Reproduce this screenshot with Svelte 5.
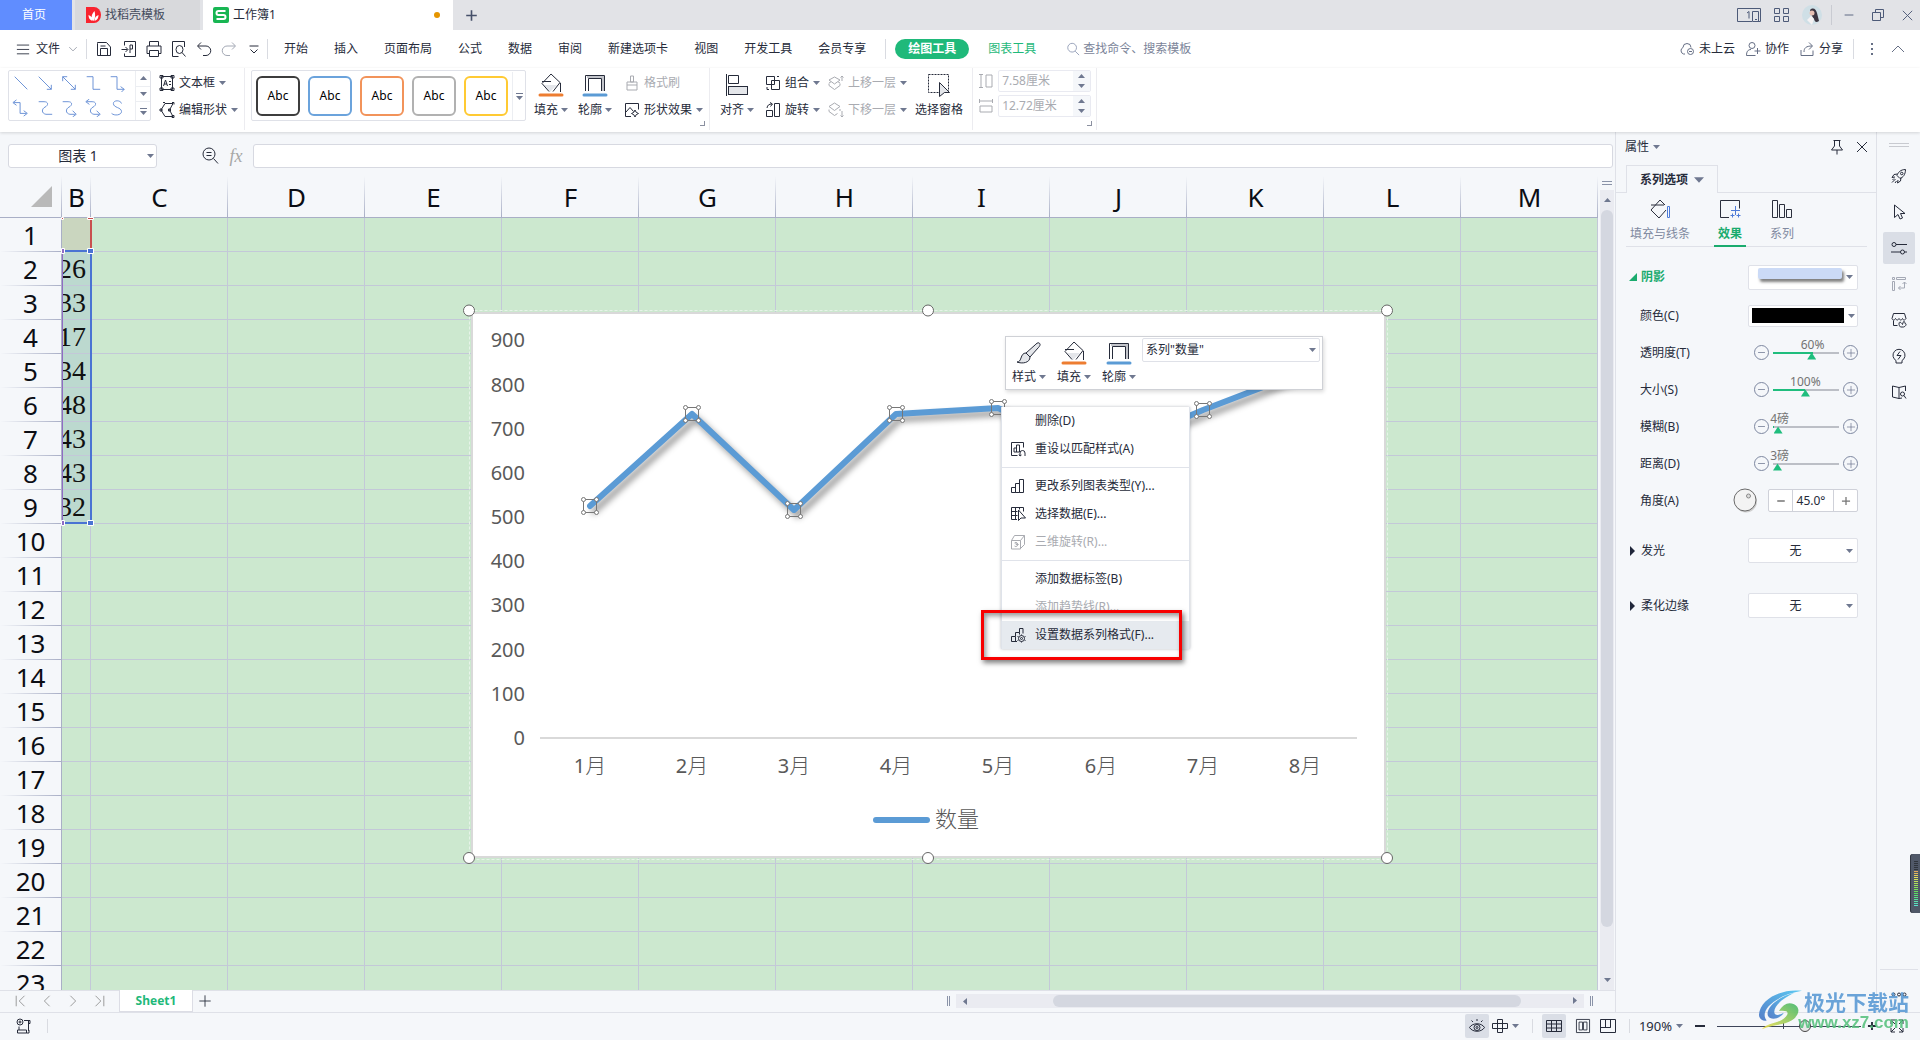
<script lang="ts">
  const menuTabs = ["开始", "插入", "页面布局", "公式", "数据", "审阅", "新建选项卡", "视图", "开发工具", "会员专享"];
  const columns = ["C", "D", "E", "F", "G", "H", "I", "J", "K", "L", "M"];
  const rows = Array.from({ length: 23 }, (_, i) => i + 1);
  const cellsB: Record<number, string> = { 2: "26", 3: "33", 4: "17", 5: "34", 6: "48", 7: "43", 8: "43", 9: "32" };

  const styleSwatches = [
    { name: "black", color: "#3d3d3d" },
    { name: "blue", color: "#6ba3dc" },
    { name: "orange", color: "#f2935a" },
    { name: "gray", color: "#b1b1b1" },
    { name: "gold", color: "#ffca33" },
  ];

  const series = [526, 733, 517, 734, 748, 643, 743, 832];
  const axis = [900, 800, 700, 600, 500, 400, 300, 200, 100, 0];
  const px = (i: number) => Math.round(119 + i * 102.1);
  const py = (v: number) => Math.round(426 - v * 0.4417);
  const linePoints = series.map((v, i) => `${px(i)},${py(v)}`).join(" ");

  const sliders = [
    { id: "alpha", label: "透明度(T)", text: "60%", pos: 60 },
    { id: "size", label: "大小(S)", text: "100%", pos: 49 },
    { id: "blur", label: "模糊(B)", text: "4磅", pos: 1 },
    { id: "dist", label: "距离(D)", text: "3磅", pos: 0 },
  ];

  type MenuItem = { label?: string; icon?: string; off?: boolean; hot?: boolean };
  const contextMenu: MenuItem[] = [
    { label: "删除(D)" },
    { label: "重设以匹配样式(A)", icon: "reset" },
    {},
    { label: "更改系列图表类型(Y)...", icon: "bars" },
    { label: "选择数据(E)...", icon: "pickData" },
    { label: "三维旋转(R)...", icon: "cube", off: true },
    {},
    { label: "添加数据标签(B)" },
    { label: "添加趋势线(R)...", off: true },
    { label: "设置数据系列格式(F)...", icon: "seriesFormat", hot: true },
  ];

  // stroke paths on a 16x16 box
  const icons: Record<string, string> = {
    burger: "M1 3.5h14M1 8.5h14M1 13.5h14",
    chevronDown: "M2 5l6 6 6-6",
    chevronUp: "M2 11l6-6 6 6",
    save: "M1.5 2.5v12h13v-8.500l-4-4.500h-9zM4.500 14.500v-7h7v7M4.500 5h5",
    export: "M3.500 4.500v-4h11v15h-11v-3M.5 8.500h6M4.500 6l2.500 2.500-2.500 2.500M9 12v-8h2.500v4h-2.500",
    print: "M3.500 5v-4.500h9v4.500M3.500 12.500h-2.500v-7.500h14v7.500h-2.500M3.500 9.500h9v6h-9z",
    preview: "M13.500 6v-5.500h-12v15h6M5 8.500a3.500 4 0 1 0 7 0a3.500 4 0 1 0-7 0M11 11.500l3.500 4",
    undo: "M5 1.500l-3.500 3.500 3.500 3.500M2 5h8a4.500 4.500 0 0 1 0 9.500h-3",
    redo: "M11 1.500l3.500 3.500-3.500 3.500M14 5h-8a4.500 4.500 0 0 0 0 9.500h3",
    more: "M3.500 5h9M4.500 8.500l3.500 3.500 3.500-3.500",
    search: "M2 6.500a5 5 0 1 0 10 0a5 5 0 1 0-10 0M10.500 10.500l4.500 4.500",
    cloud: "M6 13h-1.500a3.500 3.500 0 0 1-.5-6.500a4 4 0 0 1 8 0M8.500 10.500a3 3 0 1 0 6 0a3 3 0 1 0-6 0M10 10.500h3",
    person: "M4 4.500a3 3 0 1 0 6 0a3 3 0 1 0-6 0M6 8.500c-3 0-4.500 2-4.500 6h9M12.500 7v6M9.500 10h6",
    share: "M2 9v5.500h12v-5M5 11c0-4 2-6 8-6M10 1.500l3.500 3.500-3.500 3.500",
    dots: "M8 2v2M8 7v2M8 12v2",
    textBox: "M2.500 1.500h11v13h-11zM1 .5h3v2.500h-3zM12 .5h3v2.500h-3zM1 13h3v2.500h-3zM12 13h3v2.500h-3zM4.500 11l2-6 2 6M5 9h3M10 6.500h2M10 9.500h2",
    editShape: "M2 8l4-6.500h8l-3.500 6.500 3.500 6.500h-8zM6 .5h-2M13 .5h2v2M1 7h2v2h-2zM13 13.500h2v2h-2zM9.500 7h2v2h-2z",
    brush: "M6.500 1h3v6h-3zM3 7h10v3h-10zM3 10v5h10v-5",
    effects: "M7 14.500h-5.500v-13h13v6M2 10l4-4.500 3.500 4M11 8l1.200 2.300 2.300 1.200-2.300 1.200-1.200 2.300-1.200-2.300-2.300-1.200 2.300-1.200z",
    group: "M1.500 1.500h8v8h-8zM6.500 5.500h8v9h-8zM12 1.500h2M2 12v2.500h2",
    rotate: "M9.500 1.500h5v13h-5zM1.500 8.500h6v6h-6zM2 6c.5-3 2-4 5-4M5 .5l2.500 1.500-2 2.500",
    layerUp: "M6.500 2l5.500 3-5.500 4-5.500-4zM1 8l2-1.200M12 8l-2-1.200M1 8.500v2l5.500 4 5.500-4v-2M14 6v-5M12.500 2.500l1.500-1.500 1.500 1.500",
    layerDown: "M6.500 1l5.500 3.500-5.500 4-5.500-4zM1 7.500v2l5.500 4 3-2M12 7v2M14 9v6M12.500 13.500l1.500 1.500 1.500-1.500",
    height: "M1 1.500h4M3 1.500v13M1 14.500h4M8 2h6v12h-6z",
    width: "M1.500 1v4M1.500 3h13M14.500 1v4M2 8h12v6h-12z",
    pin: "M4.500 1.500h7M5.500 2v5l-3 4h11l-3-4v-5M8 11v4.500",
    close: "M3 3l10 10M13 3l-10 10",
    first: "M2.500 2v12M12 2l-6 6 6 6",
    prev: "M11 2l-6 6 6 6",
    next: "M5 2l6 6-6 6",
    last: "M4 2l6 6-6 6M13.500 2v12",
    plus: "M8 1.500v13M1.500 8h13",
    minus: "M3 8h10",
    reset: "M13.500 6.500v-5h-12v13h6M4 11v-4h2.500v-3h3v7h-5.500M6.500 7v4M10 15v-3a2.500 2.500 0 0 1 5 0v3M9 13.500l1 1.500 1.500-1",
    bars: "M1.500 14.500v-5h4v5zM5.500 14.500v-9h4v9zM9.500 14.500v-13h4v13z",
    pickData: "M7 13.500h-5.500v-12h12v4M1.500 5.500h6M1.500 9.500h6M5.500 1.500v12M9.500 1.500v2M8.500 4v10.500l2.500-2.500h4.500z",
    cube: "M1.500 6.500h9v8.500h-9zM1.500 6.500l3-5h10l-4 5M14.500 1.500v9l-4 4M4.500 12a2 2 0 1 0 0-3M6 8v2.500h2.500",
    seriesFormat: "M7 14.500h-5.500v-5h4v-4h4v-4h3.500v5M5.500 9.500v5M9.500 5.500v2M8.500 11.500a3 3 0 1 0 6 0a3 3 0 1 0-6 0M10.500 11.500a1 1 0 1 0 2 0a1 1 0 1 0-2 0M11.500 7.500v1M11.500 14.500v1M7.500 9.500l1.200.5M14.500 13l1 .5M7.500 13.500l1-.5M14.500 10l1-.5",
    rocket: "M14.500 1.500c-5 0-7.500 3-8.500 6l3 3c3-1 5.500-4 5.500-9zM9.500 5.500a1 1 0 1 0 2.500 0a1 1 0 1 0-2.500 0M6.500 6l-3.500.5-2 3 3-.5M10 9.500l-.5 3.500-3 2 .5-3M4.500 11l-3.500 3.500M3 10.500l-1.500 1.500M5.500 13l-1.500 2",
    cursor: "M3.500 1v12.500l3.500-3 2 4.500 2.500-1-2-4.500h4.500z",
    sliders: "M1 4.500a2 2 0 1 0 4 0a2 2 0 1 0-4 0M5 4.500h11M9.500 12a2 2 0 1 0 4 0a2 2 0 1 0-4 0M0 12h9.500M13.500 12h2.500",
    transpose: "M1.500 5.500h2v9h-2zM5.500 1.500h9v2h-9zM1.500 1.500h2v2h-2zM13.500 6v6h-6M11.500 8l2-2 2 2M9.500 10l-2 2 2 2",
    skin: "M2.500 8.500v5h4M2.500 1.500h11l1.500 5c-1 2-3 2-3.500 0c-1 2-2.500 2-3.500 0c-1 2-2.500 2-3.500 0c-1 2-3 2-3.500 0zM8 12c0-3 2-2 3.500.5c1-4 2-4 2.500-1c2 0 1 3-1.500 3.500h-3c-1-1-1.500-2-1.500-3z",
    bulb: "M5 12.500a6 6 0 1 1 6 0v2.500h-6zM9 3.500l-3 4h4l-3 4",
    book: "M8 3.500l-6.500-1.500v11l6.500 1.500 3-.5M8 3.500v11M8 3.500l6.500-1.500v5M9.500 10a2 2 0 1 0 4 0a2 2 0 1 0-4 0M13 11.500l2 3",
    macro: "M1 4a3 3 0 1 0 6 0a3 3 0 1 0-6 0M3 4a1 1 0 1 0 2 0a1 1 0 1 0-2 0M8 2.500h6v3h-2M12.500 3v10M3 8.500v3.500M1.500 12h9v3h-9zM10.500 15h2.500v-3",
    eye: "M.5 9.500c3-5 12-5 15 0c-3 5-12 5-15 0zM5 9.500a3 3 0 1 0 6 0a3 3 0 1 0-6 0M7 9.500a1 1 0 1 0 2 0a1 1 0 1 0-2 0M8 1v2M2.500 2.500l1.500 1.500M13.500 2.500l-1.500 1.500",
    cross: "M5.500 1.500h5v13h-5zM.5 5.500h15v5h-15z",
    grid: "M.5 2.500h15v11h-15zM.5 6h15M.5 10h15M5.500 2.500v11M10.500 2.500v11",
    pages: "M.5 .5h15v15h-15zM3.500 3.500h4v9h-4zM8.500 3.500h4v9h-4z",
    breaks: "M.5 1.500h15v13h-15zM.5 9.500h10v-8M5.500 1.500v8M10.500 9.500v-2",
    full: "M2 6v-4h4M10 2h4v4M14 10v4h-4M6 14h-4v-4M2 2l4 4M14 2l-4 4M14 14l-4-4M2 14l4-4",
  };

  const lineShapes = [
    "M3 3l14 14",
    "M3 3l14 14M17 12v5h-5",
    "M3 3l14 14M17 12v5h-5M3 8v-5h5",
    "M3 3h7v14h8",
    "M3 3h7v14h8M14 14l4 3-3 3",
    "M5 1l-4 3 4 3M2 4h7v12h7M13 13l4 3-4 3",
    "M3 3h6c5 0 5 4 1 6s-4 7 1 8h7",
    "M3 3h6c5 0 5 4 1 6s-4 7 1 8h6M14 13l4 4-4 3",
    "M6 0l-4 3 4 3M3 3h6c5 0 5 4 1 6s-4 7 1 8h6M14 13l4 4-4 3",
    "M15 5c-1-4-9-4-9 0c0 5 9 4 9 9c0 4-8 5-11 2",
  ];

  const railIcons = ["rocket", "cursor", "sliders", "transpose", "skin", "bulb", "book"];
  const levels = Array.from({ length: 23 }, (_, i) =>
    i < 5 ? "#2f343c" : `hsl(${Math.round(35 + (i - 5) * 8)} 70% 62%)`,
  );
</script>

{#snippet icon(name: string, size = 16)}
  <svg class="icon" width={size} height={size} viewBox="0 0 16 16" aria-hidden="true">
    <path d={icons[name]} />
  </svg>
{/snippet}

{#snippet caret(big = false)}
  <svg class="caret" width={big ? 10 : 7} height={big ? 6 : 4} viewBox="0 0 7 4" aria-hidden="true">
    <path d="M0 0h7l-3.500 4z" />
  </svg>
{/snippet}

{#snippet fillIcon(size = 24)}
  <svg class="icon" width={size} height={size} viewBox="0 0 24 24" aria-hidden="true">
    <path d="M5 12h13l-7 7z" fill="#e4e6ea" stroke="none" />
    <path d="M3 8.500h9M12 1l-9 9.500 7 8M12 1l9 8.500-7 9M21.500 10v9" />
    <path d="M1 22h22" stroke="#ed7d31" stroke-width="3" stroke-linecap="round" />
  </svg>
{/snippet}

{#snippet outlineIcon(size = 24)}
  <svg class="icon" width={size} height={size} viewBox="0 0 24 24" aria-hidden="true">
    <path d="M4 4h16v14" stroke="#c3c5cb" stroke-width="2" />
    <path d="M2.500 18v-15.500h19v15.500M5.500 18v-12.500h13v12.500" />
    <path d="M1 22h22" stroke="#5b9bd5" stroke-width="3" stroke-linecap="round" />
  </svg>
{/snippet}

<div class="app">
  <header class="titlebar">
    <button class="doc home">首页</button>
    <button class="doc docer">
      <svg width="15" height="16" viewBox="0 0 15 16" aria-hidden="true">
        <path d="M0 0h8a7 8 0 0 1 0 16h-8z" fill="#f9242f" />
        <path d="M7.500 14c-3-3-2-7 1-10c1 4 1 7-1 10zM6.500 14c-3-1-4-3-4-6c3 1 4 3 4 6zM8.500 14c0-3 1-5 4-6c0 3-1 5-4 6z" fill="#fff" />
      </svg>
      找稻壳模板
    </button>
    <button class="doc current">
      <svg width="16" height="16" viewBox="0 0 16 16" aria-hidden="true">
        <rect width="16" height="16" rx="2" fill="#18b653" />
        <path d="M12.500 4h-7q-2 0-2 2t2 2h5q2 0 2 2t-2 2h-7" fill="none" stroke="#fff" stroke-width="2" />
      </svg>
      工作簿1
      <span class="unsaved"></span>
    </button>
    <button class="new-doc" aria-label="新建">{@render icon("plus", 13)}</button>
    <div class="win">
      <svg class="icon" width="24" height="14" viewBox="0 0 24 14" aria-hidden="true">
        <path d="M15 13.500h-14.500v-13h23v13h-3M15.500 3.500h6v10h-6zM18 11.500h2M10 5l2-1.500v7" />
      </svg>
      <svg class="icon" width="15" height="14" viewBox="0 0 15 14" aria-hidden="true">
        <path d="M.5 .5h5v5h-5zM9.500 .5h5v5h-5zM.5 8.500h5v5h-5zM9.500 8.500h5v5h-5z" />
      </svg>
      <svg width="20" height="20" viewBox="0 0 20 20" aria-hidden="true">
        <circle cx="10" cy="10" r="10" fill="#cfdfe6" />
        <path d="M8 5c3-3 6-1 7 3l2 8c-3 2-4 1-5-2l-2-3z" fill="#3b3440" />
        <circle cx="10" cy="8" r="2.500" fill="#e7c0b4" />
        <path d="M5 15l4-4 3 3-2 6z" fill="#f5f2f3" />
      </svg>
      <span class="bar-sep"></span>
      <button aria-label="最小化">{@render icon("minus", 14)}</button>
      <button aria-label="还原">
        <svg class="icon" width="12" height="12" viewBox="0 0 12 12"><path d="M.5 3.500h8v8h-8zM3.500 3.500v-3h8v8h-3" /></svg>
      </button>
      <button aria-label="关闭">{@render icon("close", 15)}</button>
    </div>
  </header>

  <nav class="menubar">
    <button class="file">{@render icon("burger", 14)}文件<span class="dim">{@render icon("chevronDown", 10)}</span></button>
    <span class="bar-sep"></span>
    <div class="quick">
      {#each ["save", "export", "print", "preview", "undo", "redo", "more"] as q (q)}
        <button class:faint={q === "redo"} aria-label={q}>{@render icon(q)}</button>
      {/each}
    </div>
    <span class="bar-sep"></span>
    <div class="tabs">
      {#each menuTabs as t (t)}
        <button>{t}</button>
      {/each}
    </div>
    <span class="bar-sep"></span>
    <button class="pill">绘图工具</button>
    <button class="green">图表工具</button>
    <label class="find">
      {@render icon("search", 14)}
      <input type="text" placeholder="查找命令、搜索模板" />
    </label>
    <div class="account">
      <button>{@render icon("cloud")}未上云</button>
      <button>{@render icon("person")}协作</button>
      <button>{@render icon("share")}分享</button>
      <span class="bar-sep"></span>
      <button class="dots" aria-label="更多">{@render icon("dots")}</button>
      <button aria-label="收起">{@render icon("chevronUp")}</button>
    </div>
  </nav>

  <section class="ribbon">
    <div class="group shapes">
      <div class="gallery">
        <div class="shape-grid">
          {#each lineShapes as d (d)}
            <button aria-label="线条"><svg width="18" height="18" viewBox="0 0 20 20"><path {d} /></svg></button>
          {/each}
        </div>
        <div class="steps">
          <span class="up">{@render caret()}</span>
          <span>{@render caret()}</span>
          <span class="drop">{@render caret()}</span>
        </div>
      </div>
      <div class="stack">
        <button class="cmd">{@render icon("textBox")}文本框{@render caret()}</button>
        <button class="cmd">{@render icon("editShape")}编辑形状{@render caret()}</button>
      </div>
    </div>

    <div class="group styles">
      <div class="swatches">
        {#each styleSwatches as s (s.name)}
          <button class="swatch" style="border-color:{s.color}">Abc</button>
        {/each}
        <span class="drop">{@render caret()}</span>
      </div>
      <button class="big">{@render fillIcon()}<span>填充{@render caret()}</span></button>
      <button class="big">{@render outlineIcon()}<span>轮廓{@render caret()}</span></button>
      <div class="stack">
        <button class="cmd off">{@render icon("brush")}格式刷</button>
        <button class="cmd">{@render icon("effects")}形状效果{@render caret()}</button>
      </div>
      <i class="corner"></i>
    </div>

    <div class="group arrange">
      <button class="big">
        <svg class="icon" width="24" height="24" viewBox="0 0 24 24" aria-hidden="true">
          <rect x="3.500" y="13.500" width="19" height="8" fill="#e4e6ea" />
          <path d="M1.500 1v22M3.500 2.500h10v8h-10z" />
        </svg>
        <span>对齐{@render caret()}</span>
      </button>
      <div class="stack">
        <button class="cmd">{@render icon("group")}组合{@render caret()}</button>
        <button class="cmd">{@render icon("rotate")}旋转{@render caret()}</button>
      </div>
      <div class="stack">
        <button class="cmd off">{@render icon("layerUp")}上移一层{@render caret()}</button>
        <button class="cmd off">{@render icon("layerDown")}下移一层{@render caret()}</button>
      </div>
      <button class="big">
        <svg class="icon" width="24" height="24" viewBox="0 0 24 24" aria-hidden="true">
          <path d="M1.500 1.500h20v18h-20z" stroke-dasharray="2 1" />
          <path d="M12.500 9.500l10 10h-5l-5 4z" fill="#e4e6ea" />
        </svg>
        <span>选择窗格</span>
      </button>
    </div>

    <div class="group dims">
      <label>
        {@render icon("height")}
        <span class="spin"><input type="text" value="7.58厘米" aria-label="高度" disabled /><span class="steps2"><b>{@render caret()}</b>{@render caret()}</span></span>
      </label>
      <label>
        {@render icon("width")}
        <span class="spin"><input type="text" value="12.72厘米" aria-label="宽度" disabled /><span class="steps2"><b>{@render caret()}</b>{@render caret()}</span></span>
      </label>
      <i class="corner"></i>
    </div>
  </section>

  <main>
    <section class="sheet">
      <div class="formula">
        <label class="name-box">
          <input type="text" value="图表 1" aria-label="名称框" />
          {@render caret()}
        </label>
        <button class="zoom-fx" aria-label="浏览">
          <svg class="icon" width="18" height="18" viewBox="0 0 18 18"><path d="M2 7a6 6 0 1 0 12 0a6 6 0 1 0-12 0M12.500 11.500l4.500 5M5.500 5.500h5M5.500 8.500h5" /></svg>
        </button>
        <span class="fx">fx</span>
        <input class="formula-input" type="text" aria-label="编辑栏" />
      </div>

      <div class="canvas">
        <div class="grid">
          <table>
            <thead>
              <tr>
                <th class="corner-cell"><svg width="21" height="21" viewBox="0 0 21 21" aria-hidden="true"><path d="M21 0v21h-21z" fill="#b9b9b9" /></svg></th>
                <th class="narrow">B</th>
                {#each columns as c (c)}
                  <th>{c}</th>
                {/each}
              </tr>
            </thead>
            <tbody>
              {#each rows as r (r)}
                <tr>
                  <th scope="row">{r}</th>
                  <td class:head={r === 1} class:picked={r > 1 && r < 10}><div>{cellsB[r] ?? ""}</div></td>
                  {#each columns as c (c)}
                    <td></td>
                  {/each}
                </tr>
              {/each}
            </tbody>
          </table>
        </div>

        <div class="vscroll">
          <span class="split"><i></i></span>
          <div class="track">
            <span class="up">{@render caret()}</span>
            <div class="thumb"></div>
            <span>{@render caret()}</span>
          </div>
        </div>

        <svg class="ranges" width="36" height="314" viewBox="0 0 36 314" aria-hidden="true">
          <path d="M31 3v34" stroke="#c9504f" stroke-width="2" />
          <path d="M2.500 36v272" stroke="#8f6cc4" stroke-width="1" />
          <path d="M4 36h27M31 36v272M4 308h27" stroke="#4a73d3" stroke-width="2" fill="none" />
          <g stroke="#fff">
            <path d="M27.500 2.500h6v2h-6zM1.500 2.500h2v2h-2z" fill="#c9504f" />
            <path d="M1.500 33.500h3v5h-3zM1.500 305.500h3v5h-3z" fill="#8f6cc4" />
            <path d="M27.500 33.500h6v5h-6zM27.500 305.500h6v5h-6z" fill="#4a73d3" />
          </g>
        </svg>

        <svg class="chart" width="932" height="562" viewBox="-8 -8 932 562" role="img" aria-label="数量">
          <rect x="-1.500" y="-1.500" width="918" height="549" fill="none" stroke="#e6f3e8" stroke-dasharray="3 2" />
          <rect x="1" y="1" width="913" height="544" fill="#fff" stroke="#d9d9d9" stroke-width="2" />
          {#each axis as a (a)}
            <text class="val" x="54" y={py(a) + 7}>{a}</text>
          {/each}
          <path d="M69 426h817" stroke="#d9d9d9" stroke-width="2" />
          <polyline class="plot" points={linePoints} />
          {#each series as v, i (i)}
            <g class="marker" transform="translate({px(i)} {py(v)})">
              <rect x="-6.500" y="-6.500" width="13" height="13" />
              <circle cx="-6.500" cy="-6.500" r="2" />
              <circle cx="6.500" cy="-6.500" r="2" />
              <circle cx="-6.500" cy="6.500" r="2" />
              <circle cx="6.500" cy="6.500" r="2" />
            </g>
            <text class="cat" x={px(i)} y="461">{i + 1}<tspan>月</tspan></text>
          {/each}
          <path d="M405 508h51" stroke="#5b9bd5" stroke-width="6" stroke-linecap="round" />
          <text class="legend" x="464" y="515">数量</text>
          {#each [-2, 457, 916] as hx (hx)}
            <circle class="handle" cx={hx} cy="-1.500" r="5.500" />
            <circle class="handle" cx={hx} cy="546" r="5.500" />
          {/each}
        </svg>

        <div class="mini">
          <button class="big">
            <svg class="icon" width="24" height="24" viewBox="0 0 24 24" aria-hidden="true">
              <path d="M22 2c2 1 1 3-1 5l-8 9-4-4 9-8c1-1 3-3 4-2zM9 12c-3 0-4 2-5 5-1 3-2 4-4 4 5 2 13 1 13-5z" fill="#e4e6ea" />
            </svg>
            <span>样式{@render caret()}</span>
          </button>
          <button class="big">{@render fillIcon()}<span>填充{@render caret()}</span></button>
          <button class="big">{@render outlineIcon()}<span>轮廓{@render caret()}</span></button>
          <label class="pick">
            <select aria-label="图表元素"><option>系列"数量"</option></select>
            {@render caret()}
          </label>
        </div>

        <div class="menu" role="menu">
          {#each contextMenu as m, i (i)}
            {#if m.label}
              <button role="menuitem" class:off={m.off} class:hot={m.hot}>
                <span class="slot">{#if m.icon}{@render icon(m.icon)}{/if}</span>{m.label}
              </button>
            {:else}
              <hr />
            {/if}
          {/each}
        </div>
        <div class="callout"></div>
      </div>

      <div class="sheetbar">
        <div class="nav">
          {#each ["first", "prev", "next", "last"] as n (n)}
            <button aria-label={n}>{@render icon(n, 14)}</button>
          {/each}
        </div>
        <button class="sheet-tab">Sheet1</button>
        <button class="add-sheet" aria-label="新建工作表">{@render icon("plus", 14)}</button>
        <div class="hscroll">
          <i class="grip"></i>
          <div class="track">
            <span class="left">{@render caret()}</span>
            <div class="thumb"></div>
            <span class="right">{@render caret()}</span>
          </div>
          <i class="grip"></i>
        </div>
      </div>
    </section>

    <aside class="panel">
      <div class="panel-head">
        <button>属性{@render caret()}</button>
        <span>{@render icon("pin")}{@render icon("close")}</span>
      </div>
      <div class="panel-tabs">
        <button>系列选项{@render caret(true)}</button>
      </div>
      <div class="subtabs">
        <button>
          <svg class="icon" width="20" height="20" viewBox="0 0 20 20" aria-hidden="true">
            <path d="M1 6h13M10 1l-9 10 8 8 7-8M10 1l5 5" />
            <path d="M17.500 7.500h2v11h-2z" stroke="#4d7bd8" />
          </svg>
          填充与线条
        </button>
        <button class="on">
          <svg class="icon" width="20" height="20" viewBox="0 0 20 20" aria-hidden="true">
            <path d="M9 18.500h-8.500v-17h19v8" />
            <path d="M15.500 7v9M11 11.500h9M12.500 14.500v4M10.500 16.500h4M18.500 14.500v4M16.500 16.500h4" stroke="#4d7bd8" />
          </svg>
          效果
        </button>
        <button>
          <svg class="icon" width="20" height="20" viewBox="0 0 20 20" aria-hidden="true">
            <path d="M.5 1.500h5v17h-5zM7.500 5.500h5v13h-5zM14.500 10.500h5v8h-5z" />
          </svg>
          系列
        </button>
      </div>

      <div class="props">
        <div class="section lead">
          <span class="green"><svg width="8" height="8" viewBox="0 0 8 8" aria-hidden="true"><path d="M8 0v8h-8z" fill="#1aab6e" /></svg>阴影</span>
          <button class="drop-box shadow" aria-label="阴影样式"><i></i>{@render caret()}</button>
        </div>
        <div class="row">
          <span>颜色(C)</span>
          <button class="drop-box color" aria-label="颜色"><i></i>{@render caret()}</button>
        </div>
        {#each sliders as s (s.id)}
          <div class="row">
            <label for={s.id}>{s.label}</label>
            <div class="slider">
              <button aria-label="减少">{@render icon("minus", 11)}</button>
              <div class="rail-box">
                <span class="tip" style="left:{s.pos < 10 ? 10 : s.pos}%">{s.text}</span>
                <input id={s.id} type="range" min="0" max="100" value={s.pos} style="--fill:{s.pos}%" />
              </div>
              <button aria-label="增加">{@render icon("plus", 10)}</button>
            </div>
          </div>
        {/each}
        <div class="row">
          <label for="angle">角度(A)</label>
          <div class="angle">
            <svg width="25" height="25" viewBox="0 0 25 25" aria-hidden="true">
              <circle cx="13" cy="13.500" r="11" fill="#cfcfcf" />
              <circle cx="12" cy="12" r="11" fill="#f3f3f3" stroke="#6b6b6b" />
              <circle cx="15.500" cy="8" r="2" fill="#ddd" stroke="#8b8b8b" />
            </svg>
            <div class="number">
              <button aria-label="减少">{@render icon("minus", 12)}</button>
              <input id="angle" type="text" value="45.0°" />
              <button aria-label="增加">{@render icon("plus", 10)}</button>
            </div>
          </div>
        </div>
        {#each [{ id: "glow", label: "发光" }, { id: "soft", label: "柔化边缘" }] as s (s.id)}
          <div class="section">
            <label for={s.id}><svg width="8" height="10" viewBox="0 0 8 10" aria-hidden="true"><path d="M1 0l5 5-5 5z" fill="#20263a" /></svg>{s.label}</label>
            <span class="drop-box">
              <select id={s.id}><option>无</option></select>{@render caret()}
            </span>
          </div>
        {/each}
      </div>
    </aside>

    <aside class="rail">
      <i class="rail-grip"></i>
      {#each railIcons as r (r)}
        <button class:active={r === "sliders"} class:faint={r === "transpose"} aria-label={r}>{@render icon(r)}</button>
      {/each}
      <span class="rail-end">
        <svg class="icon" width="16" height="5" viewBox="0 0 16 5" aria-hidden="true"><path d="M1 2.500a1 1 0 1 0 3 0a1 1 0 1 0-3 0M6.500 2.500a1 1 0 1 0 3 0a1 1 0 1 0-3 0M12 2.500a1 1 0 1 0 3 0a1 1 0 1 0-3 0" /></svg>
      </span>
    </aside>
  </main>

  <footer class="status">
    <button class="macro" aria-label="宏">{@render icon("macro")}</button>
    <span class="bar-sep"></span>
    <div class="views">
      <button class="active" aria-label="护眼模式">{@render icon("eye")}</button>
      <button class="reading" aria-label="阅读模式">{@render icon("cross")}{@render caret()}</button>
      <span class="bar-sep"></span>
      <button class="active" aria-label="普通视图">{@render icon("grid")}</button>
      <button aria-label="页面布局">{@render icon("pages", 14)}</button>
      <button aria-label="分页预览">{@render icon("breaks")}</button>
      <span class="bar-sep"></span>
      <button class="percent">190%{@render caret()}</button>
      <button class="bold" aria-label="缩小">{@render icon("minus")}</button>
      <input class="zoom" type="range" min="0" max="100" value="62" aria-label="缩放" />
      <button class="bold small" aria-label="放大">{@render icon("plus", 10)}</button>
      <button aria-label="全屏">{@render icon("full")}</button>
    </div>
  </footer>

  <div class="meter" aria-hidden="true">
    {#each levels as l, i (i)}
      <i style="background:{l}"></i>
    {/each}
  </div>

  <div class="stamp">
    <svg width="44" height="42" viewBox="0 0 46 42" aria-hidden="true">
      <defs>
        <linearGradient id="sky" x1="0" y1="1" x2="1" y2="0">
          <stop offset="0" stop-color="#4573c4" /><stop offset="1" stop-color="#4cc4f2" />
        </linearGradient>
        <linearGradient id="leaf" x1="0" y1="1" x2="1" y2="0">
          <stop offset="0" stop-color="#f4e04d" /><stop offset="1" stop-color="#3fb76a" />
        </linearGradient>
      </defs>
      <path d="M46 1c-20-3-44 8-45 25c0 5 5 7 8 6c-8-10 8-26 37-31z" fill="url(#sky)" />
      <path d="M38 3c-14 3-28 13-28 22c0 7 12 7 17-1c-5 3-10 3-10-1c0-7 10-15 21-20z" fill="url(#sky)" />
      <path d="M33 14c12 1 12 12 2 18c-8 5-19 4-31 9c6-7 18-6 24-12c5-5 4-8-6-7c3-5 7-8 11-8z" fill="url(#leaf)" />
    </svg>
    <p><strong>极光下载站</strong><span>www.xz7.com</span></p>
  </div>
</div>

<style>
  :global(body) {
    margin: 0;
  }
  .app {
    --ink: #262b3a;
    --soft: #6f7890;
    --line: #dfe1e8;
    --bg: #f5f7fa;
    --green: #1fb97a;
    position: relative;
    display: flex;
    flex-direction: column;
    height: 100vh;
    overflow: hidden;
    background: var(--bg);
    color: var(--ink);
    font: 12px/16px "Noto Sans", "Noto Sans CJK SC", sans-serif;
  }
  button,
  input,
  select {
    margin: 0;
    padding: 0;
    border: 0;
    background: none;
    color: inherit;
    font: inherit;
    appearance: none;
    outline: none;
    min-width: 0;
  }
  button {
    display: flex;
    align-items: center;
    justify-content: center;
    white-space: nowrap;
    flex-shrink: 0;
  }
  svg {
    display: block;
    flex-shrink: 0;
  }
  .icon {
    fill: none;
    stroke: currentColor;
    stroke-width: 1;
    overflow: visible;
  }
  .caret {
    fill: var(--soft);
  }
  .up .caret,
  .steps2 b .caret {
    transform: rotate(180deg);
  }
  .bar-sep {
    width: 1px;
    height: 20px;
    background: #d9dbe1;
    flex-shrink: 0;
  }
  .green {
    color: var(--green);
  }
  .faint {
    color: #a4a9b5;
  }

  /* title bar */
  .titlebar {
    display: flex;
    align-items: center;
    height: 30px;
    flex-shrink: 0;
    background: #e2e3e7;
  }
  .doc {
    height: 30px;
    gap: 4px;
  }
  .home {
    width: 72px;
    padding-right: 4px;
    background: #608dff;
    color: #fff;
  }
  .docer {
    width: 125px;
    margin: 0 3px;
    padding-left: 11px;
    justify-content: flex-start;
    background: #d8d9dc;
    color: #444b5c;
  }
  .current {
    width: 250px;
    padding: 0 13px 0 10px;
    justify-content: flex-start;
    background: #fff;
  }
  .unsaved {
    width: 6px;
    height: 6px;
    margin-left: auto;
    border-radius: 50%;
    background: #e59500;
  }
  .new-doc {
    width: 36px;
    height: 30px;
    color: #46506a;
  }
  .new-doc .icon {
    stroke-width: 2;
  }
  .win {
    display: flex;
    align-items: center;
    gap: 13px;
    margin-left: auto;
    padding-right: 5px;
    color: #4d5a78;
  }
  .win .bar-sep {
    margin: 0 -4px;
    background: #c9cbd2;
  }
  .win button {
    width: 16px;
  }

  /* menu bar */
  .menubar {
    display: flex;
    align-items: center;
    height: 38px;
    flex-shrink: 0;
    background: #fff;
  }
  .file {
    gap: 6px;
    padding: 0 8px 0 16px;
  }
  .dim {
    padding-left: 2px;
    color: #6f7585;
  }
  .quick {
    display: flex;
    padding: 0 1px 0 4px;
  }
  .quick button {
    width: 25px;
  }
  .tabs {
    display: flex;
    padding: 0 6px 0 3px;
  }
  .tabs button {
    padding: 0 13px;
  }
  .pill {
    width: 74px;
    height: 20px;
    margin: 0 19px 0 9px;
    border-radius: 10px;
    background: var(--green);
    color: #fff;
    font-weight: 700;
  }
  .find {
    display: flex;
    align-items: center;
    gap: 3px;
    margin-left: 30px;
    color: #8e99b3;
  }
  .find input {
    width: 130px;
  }
  .find input::placeholder {
    color: #7b8499;
    opacity: 1;
  }
  .account {
    display: flex;
    align-items: center;
    gap: 10px;
    margin-left: auto;
    padding-right: 14px;
  }
  .account button {
    gap: 4px;
  }
  .account .icon {
    color: #666f85;
  }
  .dots .icon {
    stroke-width: 2;
  }

  /* ribbon */
  .ribbon {
    display: flex;
    height: 64px;
    flex-shrink: 0;
    background: #fff;
    box-shadow: 0 1px 3px rgba(0, 0, 0, 0.14);
    z-index: 1;
  }
  .group {
    position: relative;
    display: flex;
    align-items: flex-start;
    margin-bottom: 2px;
    padding-top: 2px;
    border-right: 1px solid #ececf0;
  }
  .shapes {
    gap: 8px;
    padding-left: 8px;
    padding-right: 6px;
  }
  .gallery,
  .swatches {
    display: flex;
    box-sizing: border-box;
    height: 51px;
    border: 1px solid var(--line);
    border-radius: 2px;
  }
  .shape-grid {
    display: grid;
    grid-template-columns: repeat(5, 24px);
    width: 126px;
  }
  .shape-grid path {
    fill: none;
    stroke: #5f89d2;
    stroke-width: 1;
  }
  .steps {
    display: grid;
    width: 14px;
    border-left: 1px solid #eceef2;
  }
  .steps span {
    display: grid;
    place-items: center;
  }
  .steps span + span {
    border-top: 1px solid #eceef2;
  }
  .drop .caret {
    padding-top: 2px;
    border-top: 1px solid var(--soft);
  }
  .stack {
    display: grid;
    grid-template-rows: 27px 27px;
    align-items: center;
    justify-items: start;
    margin-top: -1px;
  }
  .cmd {
    gap: 4px;
  }
  .off,
  .off .caret {
    color: #a9abb1;
  }
  .styles {
    gap: 10px;
    padding-left: 6px;
    padding-right: 6px;
  }
  .styles .stack {
    margin-left: 2px;
  }
  .swatches {
    align-items: center;
    gap: 8px;
    margin-right: -2px;
    padding-top: 1px;
    padding-left: 4px;
  }
  .swatch {
    box-sizing: border-box;
    width: 44px;
    height: 40px;
    border: 2px solid;
    border-radius: 6px;
    color: #000;
  }
  .swatches .drop {
    display: grid;
    place-items: center;
    align-self: stretch;
    width: 12px;
    margin-left: -4px;
    border-left: 1px solid #eceef2;
  }
  .big {
    flex-direction: column;
    gap: 5px;
    padding-top: 3px;
  }
  .big span {
    display: flex;
    align-items: center;
    gap: 3px;
  }
  .corner {
    position: absolute;
    right: 4px;
    bottom: 4px;
    width: 4px;
    height: 4px;
    border: solid #8b90a0;
    border-width: 0 1px 1px 0;
  }
  .arrange {
    gap: 8px;
    padding-left: 10px;
    padding-right: 9px;
  }
  .arrange .big:first-child {
    margin-right: 3px;
  }
  .dims {
    display: grid;
    align-content: start;
    gap: 3px;
    padding-left: 5px;
    padding-right: 5px;
  }
  .dims label {
    display: flex;
    align-items: center;
    gap: 4px;
    color: #a9abb1;
  }
  .spin {
    display: flex;
    box-sizing: border-box;
    width: 93px;
    height: 22px;
    border: 1px solid #e9eaf1;
    border-radius: 2px;
  }
  .spin input {
    flex: 1;
    padding-left: 3px;
  }
  .steps2 {
    display: grid;
    place-items: center;
    width: 17px;
    background: var(--bg);
  }

  main {
    display: flex;
    flex: 1;
    min-height: 0;
  }
  .sheet {
    display: flex;
    flex-direction: column;
    flex: 1;
    min-width: 0;
  }
  .formula {
    display: flex;
    align-items: center;
    box-sizing: border-box;
    height: 44px;
    flex-shrink: 0;
    padding: 4px 2px 0 8px;
  }
  .name-box {
    display: flex;
    align-items: center;
    box-sizing: border-box;
    width: 149px;
    height: 24px;
    padding-right: 2px;
    border: 1px solid #d7d9e1;
    border-radius: 3px;
    background: #fff;
  }
  .name-box input {
    flex: 1;
    text-align: center;
    font-size: 14px;
  }
  .zoom-fx {
    margin-left: 44px;
  }
  .fx {
    width: 34px;
    text-align: center;
    color: #a7a7a7;
    font: italic 18px/24px "Liberation Serif", serif;
  }
  .formula-input {
    flex: 1;
    box-sizing: border-box;
    height: 24px;
    border: 1px solid #d7d9e1;
    border-radius: 3px;
    background: #fff;
  }

  /* grid */
  .canvas {
    position: relative;
    display: flex;
    flex: 1;
    min-height: 0;
    overflow: hidden;
  }
  .grid {
    flex: 1;
    min-width: 0;
    overflow: hidden;
  }
  table {
    width: 1598px;
    border-spacing: 0;
    table-layout: fixed;
  }
  th,
  td {
    box-sizing: border-box;
    height: 34px;
    padding: 0;
  }
  th {
    color: #0b0d14;
    font-size: 26px;
    line-height: 32px;
    font-weight: 400;
  }
  thead th {
    width: 137px;
    height: 42px;
    border-bottom: 1px solid #a9afc6;
    background: linear-gradient(#f5f7fa, #a9afc6) right / 1px 100% no-repeat;
  }
  thead .corner-cell {
    width: 62px;
  }
  .corner-cell svg {
    margin-left: 31px;
  }
  thead .narrow {
    width: 29px;
  }
  tbody th {
    border-right: 1px solid #a9afc6;
    background: linear-gradient(90deg, #f5f7fa, #a9afc6) bottom / 100% 1px no-repeat;
  }
  td {
    border: solid #c3c8d8;
    border-width: 0 1px 1px 0;
    background: #cce8cf;
  }
  td div {
    display: flex;
    justify-content: flex-end;
    width: 24px;
    padding-top: 1px;
    overflow: hidden;
    color: #111;
    font: 28px/32px "Liberation Serif", serif;
  }
  td.head {
    background: #cad6bf;
  }
  td.picked {
    background: #bcd9cf;
  }
  .ranges {
    position: absolute;
    left: 60px;
    top: 39px;
  }
  .vscroll {
    display: flex;
    flex-direction: column;
    width: 14px;
    margin-right: 1px;
  }
  .split {
    display: grid;
    place-items: center;
    height: 14px;
  }
  .split i {
    width: 10px;
    height: 2px;
    border: solid #8a93a8;
    border-width: 1px 0;
  }
  .track {
    background: #eaebf1;
  }
  .track span {
    display: grid;
    place-items: center;
  }
  .thumb {
    border-radius: 6px;
    background: #d4d7e0;
  }
  .vscroll .track {
    display: grid;
    grid-template-rows: 20px 1fr 63px;
    flex: 1;
    justify-items: center;
  }
  .vscroll .thumb {
    width: 12px;
  }
  .vscroll .track span:last-child {
    align-self: end;
    height: 20px;
  }

  /* chart */
  .chart {
    position: absolute;
    left: 463px;
    top: 128px;
  }
  .chart text {
    fill: #595959;
    font-size: 20px;
  }
  .val {
    text-anchor: end;
  }
  .cat {
    text-anchor: middle;
  }
  .cat tspan {
    font-size: 21px;
    font-weight: 300;
  }
  .chart .legend {
    font-size: 22px;
    font-weight: 300;
  }
  .plot {
    fill: none;
    stroke: #5b9bd5;
    stroke-width: 6;
    stroke-linecap: round;
    stroke-linejoin: round;
    filter: drop-shadow(4px 5px 3px rgba(0, 0, 0, 0.4));
  }
  .marker {
    fill: none;
    stroke: #777;
  }
  .marker circle {
    fill: #fff;
  }
  .handle {
    fill: #fff;
    stroke: #666;
  }

  /* floating toolbar and menu */
  .mini {
    position: absolute;
    left: 1005px;
    top: 160px;
    display: flex;
    gap: 11px;
    align-items: flex-start;
    box-sizing: border-box;
    width: 318px;
    height: 54px;
    padding: 1px 2px 0 6px;
    border: 1px solid #cfd1d6;
    background: #fff;
    box-shadow: 1px 2px 4px rgba(0, 0, 0, 0.15);
  }
  .mini .big {
    gap: 4px;
  }
  .pick {
    display: flex;
    align-items: center;
    flex: 1;
    box-sizing: border-box;
    height: 24px;
    margin-left: -5px;
    padding: 0 3px;
    border: 1px solid var(--line);
    border-radius: 2px;
  }
  .pick select {
    flex: 1;
  }
  .menu {
    position: absolute;
    left: 1001px;
    top: 231px;
    box-sizing: border-box;
    width: 189px;
    border: solid #dfe3ea;
    border-width: 0 1px;
    background: #fff;
    box-shadow: 0 0 3px rgba(60, 70, 90, 0.35);
  }
  .menu button {
    width: 100%;
    height: 28px;
    gap: 9px;
    padding-left: 8px;
    justify-content: flex-start;
  }
  .menu .hot {
    background: #e6eaef;
  }
  .slot {
    width: 16px;
  }
  .menu hr {
    height: 1px;
    margin: 4px 0;
    border: 0;
    background: #e0e3ea;
  }
  .callout {
    position: absolute;
    left: 981px;
    top: 434px;
    box-sizing: border-box;
    width: 201px;
    height: 50px;
    border: 3px solid #f80000;
    box-shadow: 2px 3px 5px rgba(0, 0, 0, 0.5), inset 2px 3px 5px rgba(0, 0, 0, 0.4);
  }

  /* sheet bar */
  .sheetbar {
    display: flex;
    align-items: center;
    height: 22px;
    flex-shrink: 0;
    box-shadow: inset 0 1px var(--line);
  }
  .nav {
    display: flex;
    padding: 0 7px 0 8px;
    color: #8f8f8f;
  }
  .nav button {
    width: 26px;
  }
  .sheet-tab {
    box-sizing: border-box;
    width: 74px;
    height: 22px;
    border: solid #dcdde5;
    border-width: 0 1px 1px;
    background: #fff;
    color: var(--green);
    font-weight: 700;
  }
  .add-sheet {
    width: 24px;
  }
  .hscroll {
    display: flex;
    align-items: center;
    flex: 0 1 646px;
    gap: 6px;
    margin-left: auto;
    box-sizing: border-box;
    width: 668px;
    padding-right: 22px;
  }
  .grip {
    width: 1px;
    height: 10px;
    border: solid #8a93a8;
    border-width: 0 1px;
    flex-shrink: 0;
  }
  .hscroll .track {
    display: grid;
    grid-template-columns: 97px 1fr 63px;
    align-items: center;
    flex: 1;
    height: 14px;
  }
  .hscroll {
    flex-basis: 668px;
  }
  .hscroll .thumb {
    height: 12px;
  }
  .hscroll .left {
    width: 18px;
    transform: rotate(90deg);
  }
  .hscroll .right {
    width: 18px;
    justify-self: end;
    transform: rotate(-90deg);
  }

  /* properties panel */
  .panel {
    box-sizing: border-box;
    width: 261px;
    flex-shrink: 0;
    border-left: 1px solid var(--line);
  }
  .panel-head {
    display: flex;
    align-items: center;
    justify-content: space-between;
    box-sizing: border-box;
    height: 33px;
    padding: 0 6px 3px 9px;
  }
  .panel-head button {
    gap: 4px;
  }
  .panel-head span {
    display: flex;
    gap: 9px;
  }
  .panel-tabs {
    height: 28px;
    padding-left: 10px;
    box-shadow: inset 0 -1px var(--line);
  }
  .panel-tabs button {
    box-sizing: border-box;
    width: 92px;
    height: 28px;
    gap: 6px;
    border: 1px solid var(--line);
    border-bottom: 0;
    background: var(--bg);
    font-weight: 700;
  }
  .subtabs {
    display: flex;
    gap: 20px;
    height: 54px;
    margin: 0 9px 0 10px;
    box-shadow: inset 0 -1px var(--line);
  }
  .subtabs button {
    flex-direction: column;
    gap: 7px;
    min-width: 32px;
    padding: 1px 4px 0;
    color: #8089a0;
  }
  .subtabs .icon {
    color: #2b2f3d;
  }
  .subtabs .on {
    padding: 1px 0 0;
    box-shadow: inset 0 -2px #1aab6e;
    color: #1aab6e;
    font-weight: 700;
  }
  .props {
    padding-right: 18px;
  }
  .section,
  .row {
    display: flex;
    align-items: center;
    justify-content: space-between;
    height: 37px;
    padding-left: 24px;
  }
  .section {
    height: 55px;
    padding-left: 13px;
  }
  .row + .section {
    margin-top: 4px;
  }
  .section.lead {
    height: 60px;
    margin-bottom: -10px;
  }
  .section > label,
  .section > .green {
    display: flex;
    align-items: center;
    gap: 4px;
  }
  .section .green {
    color: #1aab6e;
    font-weight: 700;
  }
  .drop-box {
    display: flex;
    align-items: center;
    justify-content: flex-end;
    box-sizing: border-box;
    width: 110px;
    height: 25px;
    padding-right: 4px;
    border: 1px solid var(--line);
    border-radius: 2px;
    background: #fff;
  }
  .drop-box select {
    flex: 1;
    padding-right: 4px;
    text-align: center;
    text-align-last: center;
  }
  .shadow i {
    width: 84px;
    height: 11px;
    margin: 0 4px 8px 0;
    border-radius: 2px;
    background: #cbdaf6;
    box-shadow: 2px 3px 3px rgba(0, 0, 0, 0.5);
  }
  .color {
    height: 22px;
    padding-right: 2px;
  }
  .color i {
    width: 92px;
    height: 15px;
    margin-right: 4px;
    background: #000;
  }
  .slider {
    display: flex;
    align-items: center;
    gap: 4px;
  }
  .slider button {
    box-sizing: border-box;
    width: 15px;
    height: 15px;
    border: 1px solid #7d87a0;
    border-radius: 50%;
    color: #5e6984;
  }
  .rail-box {
    position: relative;
    width: 66px;
  }
  .tip {
    position: absolute;
    top: -9px;
    transform: translateX(-50%);
    color: #737373;
  }
  .rail-box input {
    display: block;
    width: 66px;
    height: 14px;
    background: linear-gradient(90deg, #1fbd7d var(--fill), #bcbfc6 0) center / 100% 2px no-repeat;
  }
  .rail-box input::-webkit-slider-thumb {
    appearance: none;
    width: 9px;
    height: 14px;
    background: #1fbd7d;
    clip-path: polygon(50% 50%, 100% 100%, 0 100%);
  }
  .angle {
    display: flex;
    align-items: center;
    gap: 10px;
  }
  .number {
    display: flex;
    box-sizing: border-box;
    width: 90px;
    height: 23px;
    border: 1px solid #cfd1d9;
    border-radius: 2px;
    background: #fff;
  }
  .number input {
    flex: 1;
    padding-right: 4px;
    border: solid #cfd1d9;
    border-width: 0 1px;
    text-align: center;
  }
  .number button {
    width: 23px;
    color: #757575;
  }
  .number .icon {
    stroke-width: 2;
  }

  .rail {
    display: flex;
    flex-direction: column;
    align-items: center;
    box-sizing: border-box;
    width: 44px;
    flex-shrink: 0;
    gap: 4px;
    padding-top: 11px;
    border-left: 1px solid var(--line);
  }
  .rail-grip {
    width: 20px;
    height: 2px;
    margin-bottom: 9px;
    border: solid #c8cad0;
    border-width: 1px 0;
  }
  .rail button {
    width: 32px;
    height: 32px;
  }
  .active {
    border-radius: 2px;
    background: #dadee6;
  }
  .rail-end {
    display: flex;
    justify-content: center;
    width: 38px;
    height: 20px;
    margin-top: auto;
    padding-top: 22px;
    border-top: 1px solid var(--line);
  }

  /* status bar */
  .status {
    display: flex;
    align-items: center;
    height: 28px;
    flex-shrink: 0;
    box-shadow: inset 0 1px var(--line);
  }
  .status .bar-sep {
    height: 14px;
  }
  .macro {
    width: 47px;
  }
  .views {
    display: flex;
    align-items: center;
    gap: 9px;
    margin-left: auto;
    padding-right: 15px;
  }
  .views .bar-sep {
    margin-left: 4px;
  }
  .views button {
    min-width: 16px;
    height: 24px;
    gap: 4px;
  }
  .views .active {
    width: 24px;
  }
  .views .reading {
    margin-left: -6px;
  }
  .percent {
    font-size: 13px;
  }
  .bold .icon {
    stroke-width: 2;
  }
  .views .small .icon {
    stroke-width: 3;
  }
  .zoom {
    width: 144px;
    height: 14px;
    margin-right: -6px;
    background:
      linear-gradient(#3d4459, #3d4459) 46% center / 1px 6px no-repeat,
      linear-gradient(#3d4459, #3d4459) center / 100% 1px no-repeat;
  }
  .zoom::-webkit-slider-thumb {
    appearance: none;
    box-sizing: border-box;
    width: 12px;
    height: 12px;
    border: 1px solid #444;
    border-radius: 50%;
    background: #e8e8e8;
  }

  /* desktop overlays */
  .meter {
    position: absolute;
    right: 0;
    top: 854px;
    display: grid;
    gap: 1px;
    padding: 7px 2px 7px 4px;
    border-radius: 3px 0 0 3px;
    background: #505868;
    box-shadow: inset 1px 0 #30353f;
  }
  .meter i {
    width: 4px;
    height: 1px;
  }
  .stamp {
    position: absolute;
    right: 11px;
    bottom: 9px;
    display: flex;
    opacity: 0.9;
    pointer-events: none;
  }
  .stamp p {
    display: grid;
    justify-items: end;
    margin: 0 0 0 -4px;
  }
  .stamp strong {
    color: #5b9bd5;
    font-size: 21px;
    line-height: 26px;
  }
  .stamp span {
    color: #5cc281;
    font: 17px/16px "Liberation Sans", sans-serif;
    font-weight: 700;
  }
</style>
